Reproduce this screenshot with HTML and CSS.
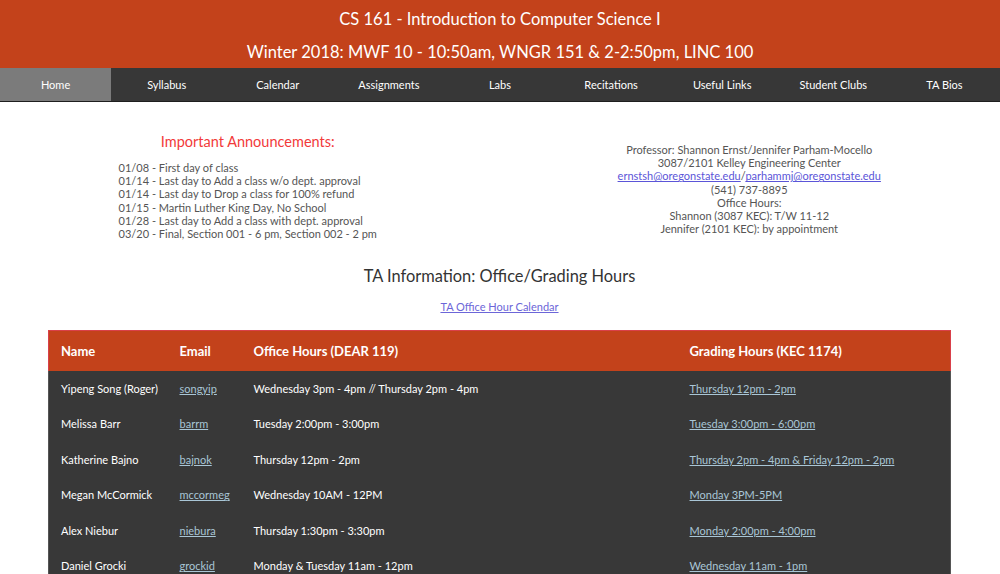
FILE: index.html
```html
<!DOCTYPE html>
<html>
<head>
<meta charset="utf-8">
<link rel="stylesheet" href="styles.css">
</head>
<body>
<header class="banner">
  <h1 class="title">CS 161 - Introduction to Computer Science I</h1>
  <h2 class="subtitle">Winter 2018: MWF 10 - 10:50am, WNGR 151 &amp; 2-2:50pm, LINC 100</h2>
</header>
<nav class="nav">
  <a class="tab active" href="#">Home</a>
  <a class="tab" href="#">Syllabus</a>
  <a class="tab" href="#">Calendar</a>
  <a class="tab" href="#">Assignments</a>
  <a class="tab" href="#">Labs</a>
  <a class="tab" href="#">Recitations</a>
  <a class="tab" href="#">Useful Links</a>
  <a class="tab" href="#">Student Clubs</a>
  <a class="tab" href="#">TA Bios</a>
</nav>
<section class="info">
  <div class="col">
    <h3 class="ann-title">Important Announcements:</h3>
    <div class="ann-list">
      01/08 - First day of class<br>
      01/14 - Last day to Add a class w/o dept. approval<br>
      01/14 - Last day to Drop a class for 100% refund<br>
      01/15 - Martin Luther King Day, No School<br>
      01/28 - Last day to Add a class with dept. approval<br>
      03/20 - Final, Section 001 - 6 pm, Section 002 - 2 pm
    </div>
  </div>
  <div class="col prof">
    Professor: Shannon Ernst/Jennifer Parham-Mocello<br>
    3087/2101 Kelley Engineering Center<br>
    <a href="#">ernstsh@oregonstate.edu</a>/<a href="#">parhammj@oregonstate.edu</a><br>
    (541) 737-8895<br>
    Office Hours:<br>
    Shannon (3087 KEC): T/W 11-12<br>
    Jennifer (2101 KEC): by appointment
  </div>
</section>
<main class="main">
  <h3 class="ta-title">TA Information: Office/Grading Hours</h3>
  <p class="ta-link"><a href="#">TA Office Hour Calendar</a></p>
  <table class="ta-table">
    <colgroup>
      <col class="c-name"><col class="c-email"><col class="c-office"><col>
    </colgroup>
    <thead>
      <tr><th>Name</th><th>Email</th><th>Office Hours (DEAR 119)</th><th>Grading Hours (KEC 1174)</th></tr>
    </thead>
    <tbody>
      <tr><td>Yipeng Song (Roger)</td><td><a href="#">songyip</a></td><td>Wednesday 3pm - 4pm // Thursday 2pm - 4pm</td><td><a href="#">Thursday 12pm - 2pm</a></td></tr>
      <tr><td>Melissa Barr</td><td><a href="#">barrm</a></td><td>Tuesday 2:00pm - 3:00pm</td><td><a href="#">Tuesday 3:00pm - 6:00pm</a></td></tr>
      <tr><td>Katherine Bajno</td><td><a href="#">bajnok</a></td><td>Thursday 12pm - 2pm</td><td><a href="#">Thursday 2pm - 4pm &amp; Friday 12pm - 2pm</a></td></tr>
      <tr><td>Megan McCormick</td><td><a href="#">mccormeg</a></td><td>Wednesday 10AM - 12PM</td><td><a href="#">Monday 3PM-5PM</a></td></tr>
      <tr><td>Alex Niebur</td><td><a href="#">niebura</a></td><td>Thursday 1:30pm - 3:30pm</td><td><a href="#">Monday 2:00pm - 4:00pm</a></td></tr>
      <tr><td>Daniel Grocki</td><td><a href="#">grockid</a></td><td>Monday &amp; Tuesday 11am - 12pm</td><td><a href="#">Wednesday 11am - 1pm</a></td></tr>
      <tr><td>Kevin Nguyen</td><td><a href="#">nguyenk</a></td><td>Friday 1pm - 3pm</td><td><a href="#">Tuesday 12pm - 2pm</a></td></tr>
    </tbody>
  </table>
</main>
</body>
</html>
```

FILE: styles.css
```css
* { box-sizing: border-box; }
html, body {
  margin: 0;
  padding: 0;
  background: #fff;
  font-family: Lato, "Open Sans", sans-serif;
}
.banner {
  background: #c3421b;
  color: #fff;
  text-align: center;
  height: 68px;
  padding-top: 8px;
}
.title, .subtitle {
  margin: 0;
  font-weight: 400;
  font-size: 16.5px;
  line-height: 22px;
}
.subtitle { margin-top: 11px; }
.nav {
  display: grid;
  grid-template-columns: repeat(9, 1fr);
  background: #373737;
  height: 34px;
  border-bottom: 1px solid #1e1e1e;
}
.tab {
  color: #fff;
  text-decoration: none;
  font-size: 11px;
  display: flex;
  align-items: center;
  justify-content: center;
  height: 33px;
}
.tab.active { background: #7b7b7b; }
.info {
  display: grid;
  grid-template-columns: 1fr 1fr;
  padding: 31px 0 0 0;
  margin-left: -3px;
  color: #555;
  font-size: 11px;
  line-height: 13.2px;
}
.col { text-align: center; }
.ann-title {
  margin: 0 0 10px 0;
  color: #f23a3a;
  font-weight: 400;
  font-size: 14.5px;
  line-height: 18px;
}
.ann-list {
  display: inline-block;
  text-align: left;
}
.prof { padding-top: 10px; }
.prof a { color: #5b55d8; }
.main { padding: 0 49px 0 48px; }
.ta-title {
  margin: 25px 0 0 0;
  text-align: center;
  font-weight: 400;
  font-size: 16.4px;
  line-height: 22px;
  color: #333;
}
.ta-link {
  margin: 13px 0 0 0;
  text-align: center;
  font-size: 11px;
  line-height: 14px;
}
.ta-link a { color: #6c66d8; }
.ta-table {
  margin-top: 16px;
  width: 903px;
  border-collapse: collapse;
  table-layout: fixed;
  font-size: 11px;
}
.c-name { width: 119px; }
.c-email { width: 74px; }
.c-office { width: 436px; }
.ta-table th {
  background: #c3421b;
  color: #fff;
  text-align: left;
  font-size: 13px;
  font-weight: 700;
  height: 40px;
  padding: 0 12px;
  border-top: 1px solid #d9404a;
}
.ta-table th:first-child { border-left: 1px solid #d9404a; }
.ta-table th:last-child { border-right: 1px solid #d9404a; }
.ta-table td {
  background: #383838;
  color: #fff;
  height: 35.5px;
  padding: 0 12px;
  white-space: nowrap;
}
.ta-table td:first-child { border-left: 1px solid #555; }
.ta-table td:last-child { border-right: 1px solid #555; }
.ta-table td a { color: #a9c6d6; }
```
